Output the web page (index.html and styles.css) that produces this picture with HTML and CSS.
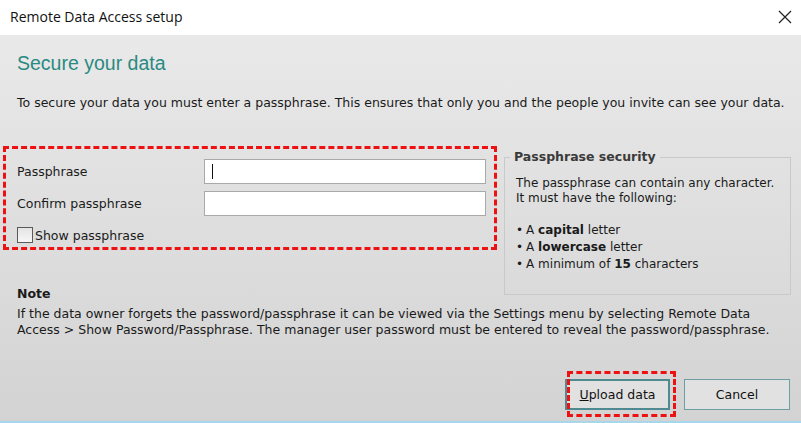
FILE: index.html
```html
<!DOCTYPE html>
<html>
<head>
<meta charset="utf-8">
<link rel="stylesheet" href="styles.css">
</head>
<body>
<div class="window">
  <div class="titlebar">
    <span class="title">Remote Data Access setup</span>
    <svg class="close" width="14" height="14" viewBox="0 0 14 14"><path d="M1 1 L13 13 M13 1 L1 13" stroke="#222" stroke-width="1.2" fill="none"/></svg>
  </div>
  <div class="content">
    <h1 class="heading">Secure your data</h1>
    <p class="intro">To secure your data you must enter a passphrase. This ensures that only you and the people you invite can see your data.</p>
    <div class="main">
      <div class="form-box">
        <div class="row">
          <span class="label">Passphrase</span>
          <div class="field"><span class="caret"></span></div>
        </div>
        <div class="row">
          <span class="label">Confirm passphrase</span>
          <div class="field"></div>
        </div>
        <div class="check-row">
          <span class="checkbox"></span>
          <span class="label">Show passphrase</span>
        </div>
      </div>
      <fieldset class="security">
        <legend>Passphrase security</legend>
        <p class="sec-text">The passphrase can contain any character.<br>It must have the following:</p>
        <ul class="rules">
          <li>A <b>capital</b> letter</li>
          <li>A <b>lowercase</b> letter</li>
          <li>A minimum of <b>15</b> characters</li>
        </ul>
      </fieldset>
      <div class="note-title">Note</div>
      <p class="note-text">If the data owner forgets the password/passphrase it can be viewed via the Settings menu by selecting Remote Data Access &gt; Show Password/Passphrase. The manager user password must be entered to reveal the password/passphrase.</p>
    </div>
    <div class="buttons">
      <button class="btn btn-primary"><u>U</u>pload data<span class="mark"></span></button>
      <button class="btn">Cancel</button>
    </div>
  </div>
</div>
</body>
</html>
```

FILE: styles.css
```css
* { box-sizing: border-box; }
html, body { margin: 0; padding: 0; }
body {
  width: 801px;
  height: 423px;
  overflow: hidden;
  font-family: "DejaVu Sans", Verdana, sans-serif;
  font-size: 12.5px;
  color: #1a1a1a;
}
.window {
  width: 801px;
  height: 423px;
  display: flex;
  flex-direction: column;
}
.titlebar {
  height: 35px;
  flex: 0 0 35px;
  background: #ffffff;
  display: flex;
  align-items: center;
  justify-content: space-between;
  padding: 0 8px 2px 10px;
}
.title {
  font-family: "Open Sans", "Noto Sans", sans-serif;
  font-size: 14px;
  color: #111;
}
.close { display: block; margin-right: 1px; }
.content {
  flex: 1;
  background: linear-gradient(#e9e9e9, #d3d3d3);
  border-bottom: 2px solid #a8d6ea;
  padding: 0 10px 0 17px;
  display: flex;
  flex-direction: column;
}
.heading {
  margin: 16px 0 0 0;
  font-family: "Liberation Sans", Arial, sans-serif;
  font-size: 19.5px;
  line-height: 24px;
  font-weight: normal;
  color: #2a8a82;
}
.intro {
  margin: 20px 0 0 0;
  line-height: 16px;
}
.main {
  margin-top: 35px;
  margin-left: -14px;
  display: grid;
  grid-template-columns: 494px 287px;
  grid-template-rows: auto 1fr auto;
  column-gap: 7px;
}
.form-box {
  grid-column: 1;
  grid-row: 1;
  height: 104px;
  border: 3px dashed #ee1111;
  padding: 10px 8px 0 11px;
  display: flex;
  flex-direction: column;
  gap: 7px;
}
.row {
  display: flex;
  align-items: center;
}
.row .label { width: 187px; }
.field {
  width: 282px;
  height: 25px;
  background: #fff;
  border: 1px solid #a9a9a9;
  display: flex;
  align-items: center;
}
.caret {
  width: 1px;
  height: 15px;
  background: #111;
  margin-left: 7px;
}
.check-row {
  display: flex;
  align-items: center;
  margin-top: 4px;
}
.checkbox {
  width: 16px;
  height: 16px;
  border: 1px solid #5a5a5a;
  background: linear-gradient(#e4e4e4, #f7f7f7);
  margin-right: 2px;
}
.security {
  grid-column: 2;
  grid-row: 1 / span 2;
  align-self: start;
  margin: 3px 0 0 0;
  border: 1px solid #c9c9c9;
  padding: 11px 10px 21px 11px;
  font-size: 12px;
  white-space: nowrap;
}
.security legend {
  padding: 0 4px;
  margin-left: -6px;
  font-size: 12.5px;
  font-weight: bold;
  color: #3a3a3a;
  line-height: 16px;
}
.sec-text {
  margin: 0;
  line-height: 15px;
}
.rules {
  margin: 16px 0 0 0;
  padding: 0;
  list-style: none;
  line-height: 17px;
}
.rules li::before {
  content: "\2022";
  margin-right: 3px;
}
.note-title {
  grid-column: 1;
  grid-row: 2;
  align-self: end;
  padding-left: 14px;
  font-weight: bold;
  line-height: 16px;
  margin-bottom: -7px;
}
.note-text {
  grid-column: 1 / span 2;
  grid-row: 3;
  margin: 11px 0 0 0;
  padding-left: 14px;
  padding-right: 15px;
  line-height: 16px;
}
.buttons {
  margin-top: auto;
  margin-bottom: 11px;
  display: flex;
  justify-content: flex-end;
  gap: 14px;
  padding-right: 1px;
}
.btn {
  position: relative;
  width: 106px;
  height: 31px;
  background: #e1e1e1;
  border: 1px solid #6d9ea2;
  font-family: "DejaVu Sans", Verdana, sans-serif;
  font-size: 12.5px;
  color: #111;
  padding: 0;
}
.btn-primary {
  width: 105px;
  border: 2px solid #4f8a90;
}
.mark {
  position: absolute;
  left: 0;
  top: -10px;
  width: 109px;
  height: 46px;
  border: 3px dashed #ee1111;
}
```
